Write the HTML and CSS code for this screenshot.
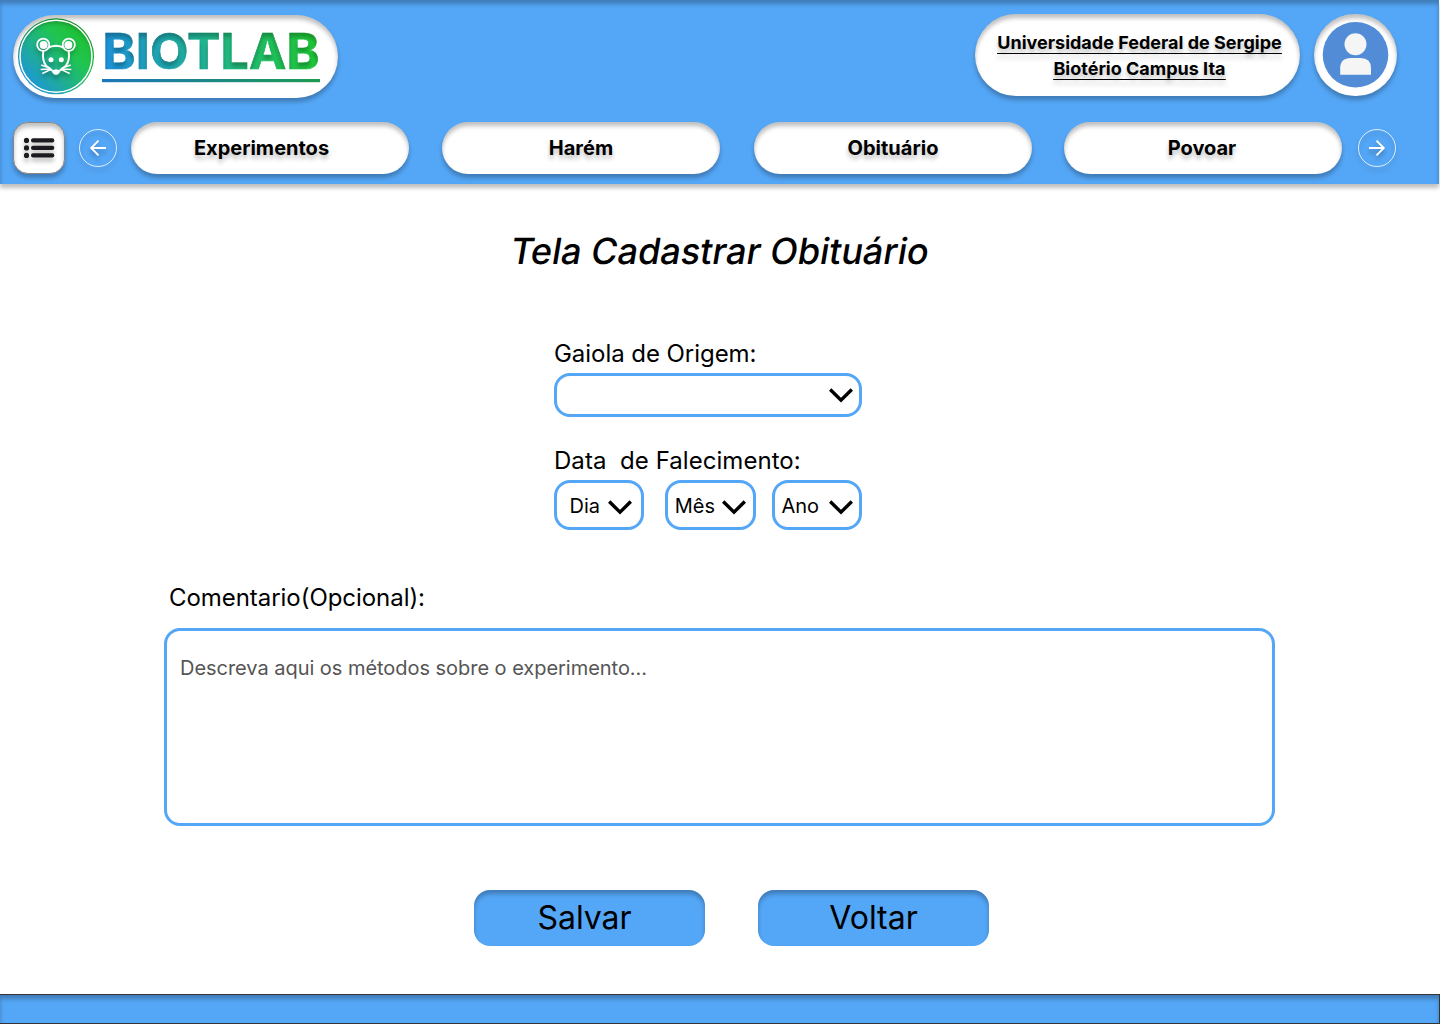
FILE: index.html
```html
<!DOCTYPE html>
<html lang="pt-BR">
<head>
<meta charset="utf-8">
<title>Biotlab - Cadastrar Obituário</title>
<link rel="stylesheet" href="styles.css">
</head>
<body>
<div class="page">
  <header class="header">
    <div class="topbar">
      <a class="logo pill">
        <svg width="325" height="83" viewBox="13 15 325 83">
          <defs>
            <linearGradient id="badge" x1="0.15" y1="0.9" x2="0.85" y2="0.25">
              <stop offset="0" stop-color="#1d95dc"/><stop offset="0.75" stop-color="#20c550"/><stop offset="1" stop-color="#1fc038"/>
            </linearGradient>
            <linearGradient id="word" gradientUnits="userSpaceOnUse" x1="108" y1="76" x2="312" y2="20">
              <stop offset="0" stop-color="#1d93dd"/><stop offset="0.5" stop-color="#20b78d"/><stop offset="1" stop-color="#1fc832"/>
            </linearGradient>
            <linearGradient id="rule" x1="0" x2="1">
              <stop offset="0" stop-color="#1c76bd"/><stop offset="1" stop-color="#1d9a50"/>
            </linearGradient>
            <filter id="drop" x="-20%" y="-20%" width="140%" height="160%" color-interpolation-filters="sRGB">
              <feDropShadow dx="0" dy="4" stdDeviation="2" flood-color="#000" flood-opacity="0.25"/>
            </filter>
            <filter id="inner" x="-5%" y="-10%" width="110%" height="120%" color-interpolation-filters="sRGB">
              <feOffset in="SourceAlpha" dy="4"/>
              <feGaussianBlur stdDeviation="2" result="b"/>
              <feComposite in="SourceAlpha" in2="b" operator="out" result="edge"/>
              <feFlood flood-color="#000" flood-opacity="0.27"/>
              <feComposite in2="edge" operator="in" result="s"/>
              <feMerge><feMergeNode in="SourceGraphic"/><feMergeNode in="s"/></feMerge>
            </filter>
          </defs>
          <g filter="url(#inner)">
            <circle cx="56" cy="56.3" r="38" fill="url(#badge)"/>
          </g>
          <circle cx="56" cy="56.3" r="36" fill="none" stroke="#fff" stroke-width="1.5"/>
          <g filter="url(#drop)" transform="translate(0 -.3)">
            <circle cx="43.2" cy="45" r="6.1" fill="none" stroke="#fff" stroke-width="1.8"/>
            <circle cx="68.8" cy="45" r="6.1" fill="none" stroke="#fff" stroke-width="1.8"/>
            <circle cx="43.6" cy="45.4" r="4" fill="#fff"/>
            <circle cx="68.4" cy="45.4" r="4" fill="#fff"/>
            <path d="M48 48.3Q51 46 56 46T64 48.3M43.3 51.5C42.5 58 43.5 63 46 66L52.5 71M68.7 51.5C69.5 58 68.5 63 66 66L59.5 71" fill="none" stroke="#fff" stroke-width="2"/>
            <circle cx="51" cy="60" r="2.5" fill="#fff"/>
            <circle cx="61.3" cy="60" r="2.5" fill="#fff"/>
            <path d="M52 71Q56 68 60 71Q59.7 74.7 56 75Q52.3 74.7 52 71Z" fill="#fff"/>
            <path d="M41.3 65.3L50.5 68.7M40.7 69.7L50.5 69.3M42.3 73.8L51 69.7M70.7 65.3L61.5 68.7M71.3 69.7L61.5 69.3M69.7 73.8L61 69.7" stroke="#fff" stroke-width="1.5" fill="none"/>
          </g>
          <g filter="url(#inner)">
            <text class="wordmark" x="102.5" y="69" textLength="217" lengthAdjust="spacing" fill="url(#word)" stroke="url(#word)" stroke-width=".7">BIOTLAB</text>
          </g>
          <rect x="102" y="79" width="218" height="3.2" fill="url(#rule)"/>
        </svg>
      </a>
      <div class="account">
        <div class="org pill"><span>Universidade Federal de Sergipe</span><span>Biotério Campus Ita</span></div>
        <div class="avatar pill">
          <svg width="67" height="66" viewBox="0 0 67 66">
            <circle cx="33.5" cy="32.8" r="32.8" fill="#528cd7"/>
            <circle cx="33.5" cy="22.2" r="11" fill="#f5f5f5"/>
            <path d="M18.2 52.7V46.2Q18.2 36 29 36H38.5Q49 36 49 46.2V52.7Z" fill="#f5f5f5"/>
          </svg>
        </div>
      </div>
    </div>
    <nav class="nav">
      <button class="menu" aria-label="Menu">
        <svg width="32" height="22" viewBox="0 0 32 22" fill="#1d1b20">
          <circle cx="3.5" cy="3.4" r="2.6"/><circle cx="3.5" cy="10.9" r="2.6"/><circle cx="3.5" cy="18.4" r="2.6"/>
          <rect x="8" y="1.3" width="23.3" height="4.2" rx="2"/><rect x="8" y="8.8" width="23.3" height="4.2" rx="2"/><rect x="8" y="16.3" width="23.3" height="4.2" rx="2"/>
        </svg>
      </button>
      <button class="arrow arrow-prev" aria-label="Anterior">
        <svg width="38" height="38" viewBox="0 0 38 38" fill="none" stroke="#fff"><circle cx="19" cy="19" r="18.5" stroke-opacity=".8"/><path d="M27 19H12.5M19.5 11.7L12.2 19L19.5 26.3" stroke-width="1.9"/></svg>
      </button>
      <a class="tab pill">Experimentos</a>
      <a class="tab pill">Harém</a>
      <a class="tab pill tab-active">Obituário</a>
      <a class="tab pill tab-last">Povoar</a>
      <button class="arrow arrow-next" aria-label="Próximo">
        <svg width="38" height="38" viewBox="0 0 38 38" fill="none" stroke="#fff"><circle cx="19" cy="19" r="18.5" stroke-opacity=".8"/><path d="M11 19H25.5M18.5 11.7L25.8 19L18.5 26.3" stroke-width="1.9"/></svg>
      </button>
    </nav>
  </header>

  <main class="main">
    <h1 class="title">Tela Cadastrar Obituário</h1>
    <div class="fields">
      <div class="label">Gaiola de Origem:</div>
      <div class="select select-wide">
        <svg class="chevron" width="24" height="16" viewBox="0 0 24 16"><path d="M1.2 1.5L12 12.2L22.8 1.5" fill="none" stroke="#000" stroke-width="3.4"/></svg>
      </div>
      <div class="label label-date">Data  de Falecimento:</div>
      <div class="date">
        <div class="select day"><span>Dia</span><svg class="chevron" width="24" height="16" viewBox="0 0 24 16"><path d="M1.2 1.5L12 12.2L22.8 1.5" fill="none" stroke="#000" stroke-width="3.4"/></svg></div>
        <div class="select month"><span>Mês</span><svg class="chevron" width="24" height="16" viewBox="0 0 24 16"><path d="M1.2 1.5L12 12.2L22.8 1.5" fill="none" stroke="#000" stroke-width="3.4"/></svg></div>
        <div class="select year"><span>Ano</span><svg class="chevron" width="24" height="16" viewBox="0 0 24 16"><path d="M1.2 1.5L12 12.2L22.8 1.5" fill="none" stroke="#000" stroke-width="3.4"/></svg></div>
      </div>
    </div>
    <div class="comment">
      <div class="label label-comment">Comentario(Opcional):</div>
      <div class="textarea">Descreva aqui os métodos sobre o experimento...</div>
    </div>
    <div class="actions">
      <button class="button save">Salvar</button>
      <button class="button">Voltar</button>
    </div>
  </main>
  <footer class="footer"></footer>
</div>
</body>
</html>
```
FILE: styles.css
```css
* { box-sizing: border-box; }

body {
  margin: 0;
  background: #fff;
  color: #000;
  font-family: Inter, "Liberation Sans", sans-serif;
}

button {
  padding: 0;
  border: 0;
  background: none;
  color: inherit;
  font-family: inherit;
}

svg { display: block; flex: none; }

.page {
  display: flex;
  flex-direction: column;
  width: 1440px;
  height: 1024px;
  overflow: hidden;
}

.header {
  width: 1439px;
  height: 184px;
  flex: none;
  padding: 14px 0 0 13px;
  background: #54a6f6;
  box-shadow: 0 4px 4px rgba(0, 0, 0, .25), inset 0 4px 4px rgba(0, 0, 0, .25);
}

.pill {
  background: #fff;
  border-radius: 42px;
  box-shadow: 0 4px 4px rgba(0, 0, 0, .25), inset 0 4px 4px rgba(0, 0, 0, .25);
}

.topbar {
  display: flex;
  justify-content: space-between;
  height: 108px;
  padding-right: 42px;
}

.logo { width: 325px; height: 83px; margin-top: 1px; }
.wordmark { font-size: 50px; font-weight: 700; }

.account { display: flex; gap: 14px; }

.org {
  display: flex;
  flex-direction: column;
  align-items: center;
  width: 325px;
  height: 82px;
  padding: 16px 0 0 4px;
  font-size: 18px;
  font-weight: 700;
  line-height: 26px;
  text-decoration: underline;
  text-underline-offset: 4px;
  text-decoration-thickness: 1px;
  text-decoration-skip-ink: none;
  text-shadow: 0 4px 4px rgba(0, 0, 0, .25);
}

.org span { text-decoration: inherit; }

.avatar {
  display: flex;
  width: 83px;
  height: 82px;
  padding: 8px 0 0 8px;
}

.nav { display: flex; align-items: center; height: 52px; }

.menu {
  display: flex;
  align-items: center;
  justify-content: center;
  width: 52px;
  height: 52px;
  border: 1px solid #8c8580;
  border-radius: 15px;
  background: #fff;
  box-shadow: 0 4px 4px rgba(0, 0, 0, .25), inset 0 4px 4px rgba(0, 0, 0, .25);
}

.menu svg, .arrow svg { filter: drop-shadow(0 4px 2px rgba(0, 0, 0, .25)); }

.arrow-prev { margin: 0 14px; }
.arrow-next { margin-left: 16px; }

.tab {
  width: 278px;
  height: 52px;
  margin-right: 33px;
  padding-right: 17px;
  border-radius: 26px;
  font-size: 20px;
  font-weight: 700;
  line-height: 52px;
  text-align: center;
  text-shadow: 0 4px 4px rgba(0, 0, 0, .25);
}

.tab + .tab { padding-right: 0; }
.tab-active { margin: 0 32px 0 1px; }
.tab-last { margin-right: 0; }
.tab + .tab-last { padding-right: 2px; }

.main { flex: 1; }

/* Slanted upright letters keep the double-storey "a" */
.title {
  margin: 44px 0 0;
  padding-left: 0;
  font-size: 36px;
  font-weight: 500;
  line-height: 46px;
  text-align: center;
  transform: skewX(-9.4deg);
}

.fields { width: 308px; margin: 65px 0 0 554px; }

.label {
  font-size: 24px;
  line-height: 29px;
  letter-spacing: -.05px;
  white-space: pre;
}

.label-date { margin-top: 29px; letter-spacing: .05px; }

.select {
  display: flex;
  align-items: center;
  justify-content: flex-end;
  height: 50px;
  padding-right: 6px;
  border: 3px solid #54a6f6;
  border-radius: 16px;
  font-size: 20px;
}

.select span { padding-top: 2px; }
.select-wide { height: 44px; margin-top: 5px; }
.select-wide .chevron { margin-top: 1px; }
.date { display: flex; margin-top: 5px; }
.date .chevron { margin-top: 5px; }
.day { width: 90px; gap: 8px; padding-right: 9px; }
.month { width: 91px; margin: 0 16px 0 21px; gap: 7px; padding-right: 7px; }
.year { width: 90px; gap: 10px; }

.comment { width: 1111px; margin: 53px 0 0 164px; }
.label-comment { padding-left: 5px; }

.textarea {
  height: 198px;
  margin-top: 16px;
  padding: 25px 13px;
  border: 3px solid #54a6f6;
  border-radius: 16px;
  color: #555;
  font-size: 20px;
  line-height: 24px;
  letter-spacing: -.035px;
}

.actions { display: flex; gap: 53px; margin: 64px 0 0 474px; }

.button {
  width: 231px;
  height: 56px;
  border-radius: 16px;
  background: #54a6f6;
  box-shadow: inset 0 4px 4px rgba(0, 0, 0, .25);
  font-size: 32px;
  line-height: 56px;
}

.save { padding-right: 10px; }

.footer {
  height: 30px;
  flex: none;
  border: 1px solid #333;
  border-width: 1px 1px 1px 0;
  background: #54a6f6;
  box-shadow: inset 0 4px 4px rgba(0, 0, 0, .25);
}
```
